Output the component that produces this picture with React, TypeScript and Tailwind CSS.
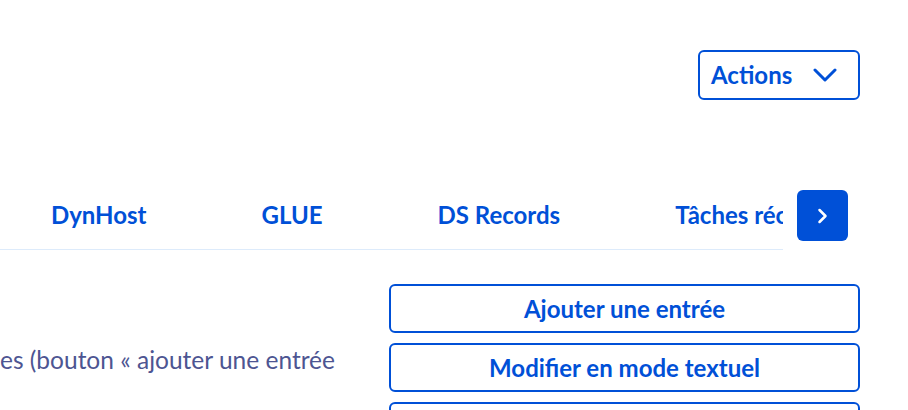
const TABS = ["DynHost", "GLUE", "DS Records", "Tâches récurrentes"];

const ACTIONS = ["Ajouter une entrée", "Modifier en mode textuel", "Réinitialiser la configuration"];

export default function App() {
  return (
    <div className="h-[410px] w-[908px] overflow-hidden bg-white font-['Lato',sans-serif] text-[#0050d7]">
      {/* Top actions */}
      <div className="flex justify-end pr-[48px] pt-[50px]">
        <button
          type="button"
          className="flex h-[50px] w-[162px] items-center rounded-[6px] border-2 border-[#0050d7] pl-[11px] text-[24px] font-bold"
        >
          <span>Actions</span>
          <svg className="ml-[21px]" width="24" height="14" viewBox="0 0 24 14" fill="none">
            <polyline points="2,2 12,12 22,2" stroke="currentColor" strokeWidth="3" strokeLinecap="round" strokeLinejoin="round" />
          </svg>
        </button>
      </div>

      {/* Tabs */}
      <div className="mt-[90px] flex items-start">
        <div className="w-[783px] overflow-hidden border-b border-[#ddebfb] pb-[9px]">
          <div className="flex h-[50px] items-center gap-[115px] whitespace-nowrap pl-[51px] text-[24px] font-bold">
            {TABS.map((tab) => (
              <span key={tab}>{tab}</span>
            ))}
          </div>
        </div>
        <button
          type="button"
          className="ml-[14px] flex h-[51px] w-[51px] items-center justify-center rounded-[6px] bg-[#0050d7] text-white"
        >
          <svg width="12" height="16" viewBox="0 0 12 16" fill="none">
            <polyline points="2.5,2 8.5,8 2.5,14" stroke="currentColor" strokeWidth="2.5" strokeLinecap="round" strokeLinejoin="round" />
          </svg>
        </button>
      </div>

      {/* Content */}
      <div className="mt-[34px] flex">
        <div className="w-[389px] pt-[61px]">
          <p className="whitespace-nowrap text-[24.5px] leading-[30px] text-[#4d5592]">
            es (bouton « ajouter une entrée
          </p>
        </div>
        <div className="flex w-[471px] flex-col gap-[10px]">
          {ACTIONS.map((label) => (
            <button
              key={label}
              type="button"
              className="flex h-[49px] items-center justify-center rounded-[6px] border-2 border-[#0050d7] text-[24px] font-bold"
            >
              {label}
            </button>
          ))}
        </div>
      </div>
    </div>
  );
}
